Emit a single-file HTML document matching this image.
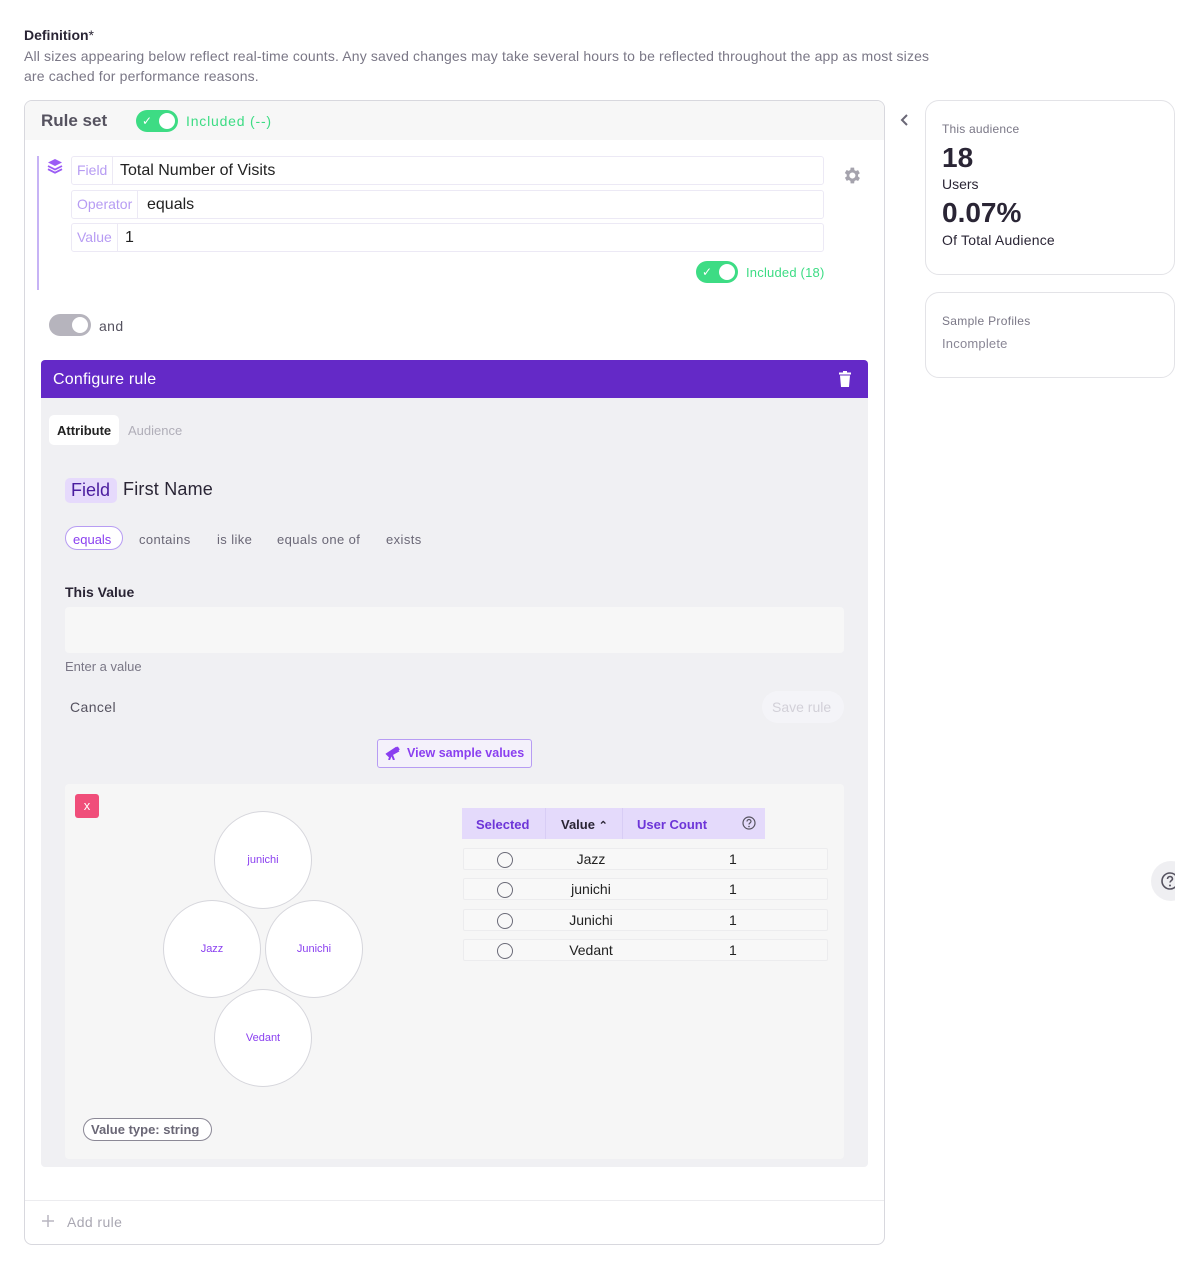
<!DOCTYPE html>
<html><head><meta charset="utf-8"><style>
*{box-sizing:border-box;margin:0;padding:0}
body{width:1199px;height:1269px;background:#fff;font-family:"Liberation Sans",sans-serif;position:relative;overflow:hidden;color:#2a2535}
.a{position:absolute}
.tog{position:absolute;width:42px;height:22px;border-radius:11px;background:#3ddc84}
.tog::after{content:"";position:absolute;right:3px;top:3px;width:16px;height:16px;border-radius:50%;background:#fff}
.tog .ck{position:absolute;left:6px;top:4px;color:#fff;font-size:12px;line-height:14px}
.fld{position:absolute;left:71px;width:753px;height:29px;border:1px solid #ece9f5;border-radius:3px;background:#fff;font-size:16px}
.fld .l{position:absolute;left:0;top:0;height:27px;padding:0 5px;line-height:27px;color:#b79cf3;font-size:14px;border-right:1px solid #ece9f5}
.fld .v{position:absolute;top:0;line-height:27px;color:#222}
.circ{position:absolute;width:98px;height:98px;border-radius:50%;background:#fff;border:1px solid #d6d6dc;color:#8a3ff0;font-size:11px;display:flex;align-items:center;justify-content:center}
.row{position:absolute;left:463px;width:365px;height:22px;border:1px solid #ececee;border-radius:2px;background:#f8f8f8;font-size:14px}
.row .r{position:absolute;left:33px;top:3px;width:16px;height:16px;border:1.5px solid #6b6b78;border-radius:50%}
.row .n{position:absolute;left:86px;width:82px;text-align:center;line-height:20px;color:#222}
.row .c{position:absolute;left:265px;line-height:20px;color:#222}
.ls{letter-spacing:.4px}
</style></head><body>
<div class="a" style="left:24px;top:27px;font-size:14px;font-weight:bold;color:#2a2535">Definition<span style="font-weight:normal">*</span></div>
<div class="a" style="left:24px;top:46px;width:960px;font-size:14px;line-height:20px;color:#7a7786;letter-spacing:.15px">All sizes appearing below reflect real-time counts. Any saved changes may take several hours to be reflected throughout the app as most sizes<br>are cached for performance reasons.</div>

<div class="a" style="left:24px;top:100px;width:861px;height:1145px;border:1px solid #d8d8de;border-radius:8px;overflow:hidden;background:#fff">
  <div class="a" style="left:0;top:0;width:100%;height:39px;background:#f7f7f7"></div>
  <div class="a" style="left:16px;top:10px;font-size:17px;font-weight:bold;color:#55525f">Rule set</div>
  <div class="tog" style="left:111px;top:9px"><span class="ck">✓</span></div>
  <div class="a ls" style="left:161px;top:12px;font-size:14px;color:#3ddc84;letter-spacing:.8px">Included (--)</div>
  <div class="a" style="left:0;top:1099px;width:100%;border-top:1px solid #ececef"></div>
  <svg class="a" style="left:16px;top:1113px" width="14" height="14" viewBox="0 0 14 14"><path d="M7 1v12M1 7h12" stroke="#b8b6c0" stroke-width="1.5"/></svg>
  <div class="a ls" style="left:42px;top:1113px;font-size:14px;color:#a9a7b2">Add rule</div>
</div>

<div class="a" style="left:37px;top:156px;width:2px;height:134px;background:#c7b3f5"></div>
<svg class="a" style="left:47px;top:158px" width="16" height="16" viewBox="0 0 16 16"><path d="M8 1L15 4.5 8 8 1 4.5z" fill="#9b5cf5"/><path d="M1 8l7 3.5L15 8M1 11.2l7 3.5 7-3.5" fill="none" stroke="#9b5cf5" stroke-width="1.8"/></svg>
<div class="fld" style="top:156px"><span class="l">Field</span><span class="v" style="left:48px">Total Number of Visits</span></div>
<div class="fld" style="top:190px"><span class="l">Operator</span><span class="v" style="left:75px">equals</span></div>
<div class="fld" style="top:223px"><span class="l">Value</span><span class="v" style="left:53px">1</span></div>
<svg class="a" style="left:841px;top:165px" width="21" height="21" viewBox="0 0 24 24"><path fill="#a5a3ad" d="M19.4 13a7.5 7.5 0 000-2l2.1-1.6-2-3.5-2.5 1a7.4 7.4 0 00-1.7-1L15 3h-4l-.4 2.7a7.4 7.4 0 00-1.7 1l-2.5-1-2 3.5L6.6 11a7.5 7.5 0 000 2l-2.1 1.6 2 3.5 2.5-1a7.4 7.4 0 001.7 1L11 21h4l.4-2.7a7.4 7.4 0 001.7-1l2.5 1 2-3.5zM13 15.5a3.5 3.5 0 110-7 3.5 3.5 0 010 7z"/></svg>
<div class="tog" style="left:696px;top:261px"><span class="ck">✓</span></div>
<div class="a" style="left:746px;top:265px;font-size:13px;color:#3ddc84;letter-spacing:.2px">Included (18)</div>

<div class="tog" style="left:49px;top:314px;background:#b6b4bd"></div>
<div class="a ls" style="left:99px;top:318px;font-size:14px;color:#55525f">and</div>

<div class="a" style="left:41px;top:360px;width:827px;height:807px;background:#f0f0f3;border-radius:4px;overflow:hidden">
  <div class="a" style="left:0;top:0;width:100%;height:38px;background:#6429c7"></div>
  <div class="a" style="left:12px;top:11px;font-size:16px;color:#fff;letter-spacing:.2px">Configure rule</div>
  <svg class="a" style="left:798px;top:11px" width="12" height="16" viewBox="0 0 12 16"><path d="M4 0h4v1.5h4V3.5H0V1.5h4zM1 4.5h10L10 16H2z" fill="#fff"/></svg>
  <div class="a" style="left:8px;top:55px;width:70px;height:30px;background:#fff;border-radius:5px"></div>
  <div class="a" style="left:16px;top:63px;font-size:13px;font-weight:bold;color:#222">Attribute</div>
  <div class="a" style="left:87px;top:63px;font-size:13px;color:#b0aeb8">Audience</div>
  <div class="a" style="left:24px;top:118px;width:52px;height:25px;background:#e6dafc;border-radius:5px"></div>
  <div class="a" style="left:30px;top:120px;font-size:18px;color:#4a1c9e">Field</div>
  <div class="a" style="left:82px;top:119px;font-size:18px;color:#2a2535;letter-spacing:.2px">First Name</div>
  <div class="a" style="left:24px;top:166px;width:58px;height:24px;border:1.5px solid #b79cf3;border-radius:12px;background:#fff"></div>
  <div class="a" style="left:32px;top:172px;font-size:13px;color:#8a3ff0">equals</div>
  <div class="a ls" style="left:98px;top:172px;font-size:13px;color:#6a6776">contains</div>
  <div class="a ls" style="left:176px;top:172px;font-size:13px;color:#6a6776">is like</div>
  <div class="a ls" style="left:236px;top:172px;font-size:13px;color:#6a6776">equals one of</div>
  <div class="a ls" style="left:345px;top:172px;font-size:13px;color:#6a6776">exists</div>
  <div class="a" style="left:24px;top:224px;font-size:14px;font-weight:bold;color:#2a2535">This Value</div>
  <div class="a" style="left:24px;top:247px;width:779px;height:46px;background:#f7f7f7;border-radius:4px"></div>
  <div class="a" style="left:24px;top:299px;font-size:13px;color:#7a7786">Enter a value</div>
  <div class="a ls" style="left:29px;top:339px;font-size:14px;color:#55525f">Cancel</div>
  <div class="a" style="left:721px;top:331px;width:82px;height:32px;background:#f4f4f8;border-radius:16px"></div>
  <div class="a" style="left:731px;top:339px;font-size:14px;color:#d2d0d8">Save rule</div>
  <div class="a" style="left:336px;top:379px;width:155px;height:29px;border:1px solid #b79cf3;border-radius:3px;background:#f4f1fb"></div>
  <svg class="a" style="left:344px;top:386px" width="15" height="14" viewBox="0 0 15 14"><path d="M2 8l9-6 2 3-9 5zM6 9l-2 5M7 9l2 5M12 1l2 3" stroke="#8a3ff0" stroke-width="2" fill="#8a3ff0"/></svg>
  <div class="a" style="left:366px;top:386px;font-size:12.5px;font-weight:bold;color:#8a3ff0">View sample values</div>

  <div class="a" style="left:24px;top:424px;width:779px;height:375px;background:#f6f6f6;border-radius:4px"></div>
  <div class="a" style="left:34px;top:434px;width:24px;height:24px;background:#f04e7a;border-radius:3px;color:#fff;font-size:13px;text-align:center;line-height:24px">x</div>
  <div class="circ" style="left:173px;top:451px">junichi</div>
  <div class="circ" style="left:122px;top:540px">Jazz</div>
  <div class="circ" style="left:224px;top:540px">Junichi</div>
  <div class="circ" style="left:173px;top:629px">Vedant</div>
  <div class="a" style="left:42px;top:758px;width:129px;height:23px;border:1.5px solid #8b8896;border-radius:12px;background:#fff"></div>
  <div class="a" style="left:50px;top:762px;font-size:13px;font-weight:bold;color:#6a6776">Value type: string</div>
</div>

<div class="a" style="left:462px;top:808px;width:303px;height:31px;background:#e4dafb"></div>
<div class="a" style="left:545px;top:808px;width:1px;height:31px;background:#d8cdf5"></div>
<div class="a" style="left:622px;top:808px;width:1px;height:31px;background:#d8cdf5"></div>
<div class="a" style="left:476px;top:817px;font-size:13px;font-weight:bold;color:#6d35d8">Selected</div>
<div class="a" style="left:561px;top:817px;font-size:13px;font-weight:bold;color:#2a2535">Value <span style="font-size:11px">&#8963;</span></div>
<div class="a" style="left:637px;top:817px;font-size:13px;font-weight:bold;color:#6d35d8">User Count</div>
<svg class="a" style="left:742px;top:816px" width="14" height="14" viewBox="0 0 14 14"><circle cx="7" cy="7" r="6" fill="none" stroke="#55525f" stroke-width="1.2"/><path d="M5 5.5a2 2 0 114 0c0 1.3-2 1.5-2 3" fill="none" stroke="#55525f" stroke-width="1.2"/><circle cx="7" cy="10.5" r=".8" fill="#55525f"/></svg>
<div class="row" style="top:848px"><span class="r"></span><span class="n">Jazz</span><span class="c">1</span></div>
<div class="row" style="top:878px"><span class="r"></span><span class="n">junichi</span><span class="c">1</span></div>
<div class="row" style="top:909px"><span class="r"></span><span class="n">Junichi</span><span class="c">1</span></div>
<div class="row" style="top:939px"><span class="r"></span><span class="n">Vedant</span><span class="c">1</span></div>

<svg class="a" style="left:900px;top:113px" width="10" height="14" viewBox="0 0 10 14"><path d="M7 2L2 7l5 5" fill="none" stroke="#6a6776" stroke-width="2"/></svg>
<div class="a" style="left:925px;top:100px;width:250px;height:175px;border:1px solid #e3e3e7;border-radius:14px"></div>
<div class="a" style="left:942px;top:122px;font-size:12px;color:#7a7786;letter-spacing:.2px">This audience</div>
<div class="a" style="left:942px;top:142px;font-size:28px;font-weight:bold;color:#2a2535">18</div>
<div class="a" style="left:942px;top:176px;font-size:14px;color:#2a2535">Users</div>
<div class="a" style="left:942px;top:197px;font-size:28px;font-weight:bold;color:#2a2535">0.07%</div>
<div class="a" style="left:942px;top:232px;font-size:14px;color:#2a2535;letter-spacing:.2px">Of Total Audience</div>
<div class="a" style="left:925px;top:292px;width:250px;height:86px;border:1px solid #e3e3e7;border-radius:14px"></div>
<div class="a" style="left:942px;top:314px;font-size:12px;color:#7a7786;letter-spacing:.3px">Sample Profiles</div>
<div class="a" style="left:942px;top:336px;font-size:13px;color:#8a8796;letter-spacing:.2px">Incomplete</div>

<div class="a" style="left:1151px;top:861px;width:40px;height:40px;border-radius:50%;background:#efeff2"></div>
<div class="a" style="left:1175px;top:861px;width:24px;height:40px;background:#fff"></div>
<svg class="a" style="left:1161px;top:871px" width="14" height="20" viewBox="0 0 14 20"><circle cx="9" cy="10" r="8" fill="none" stroke="#55525f" stroke-width="1.6"/><path d="M6.5 8a2.5 2.5 0 115 0c0 1.5-2.5 1.8-2.5 3.5" fill="none" stroke="#55525f" stroke-width="1.6"/><circle cx="9" cy="14.5" r="1" fill="#55525f"/></svg>
</body></html>
